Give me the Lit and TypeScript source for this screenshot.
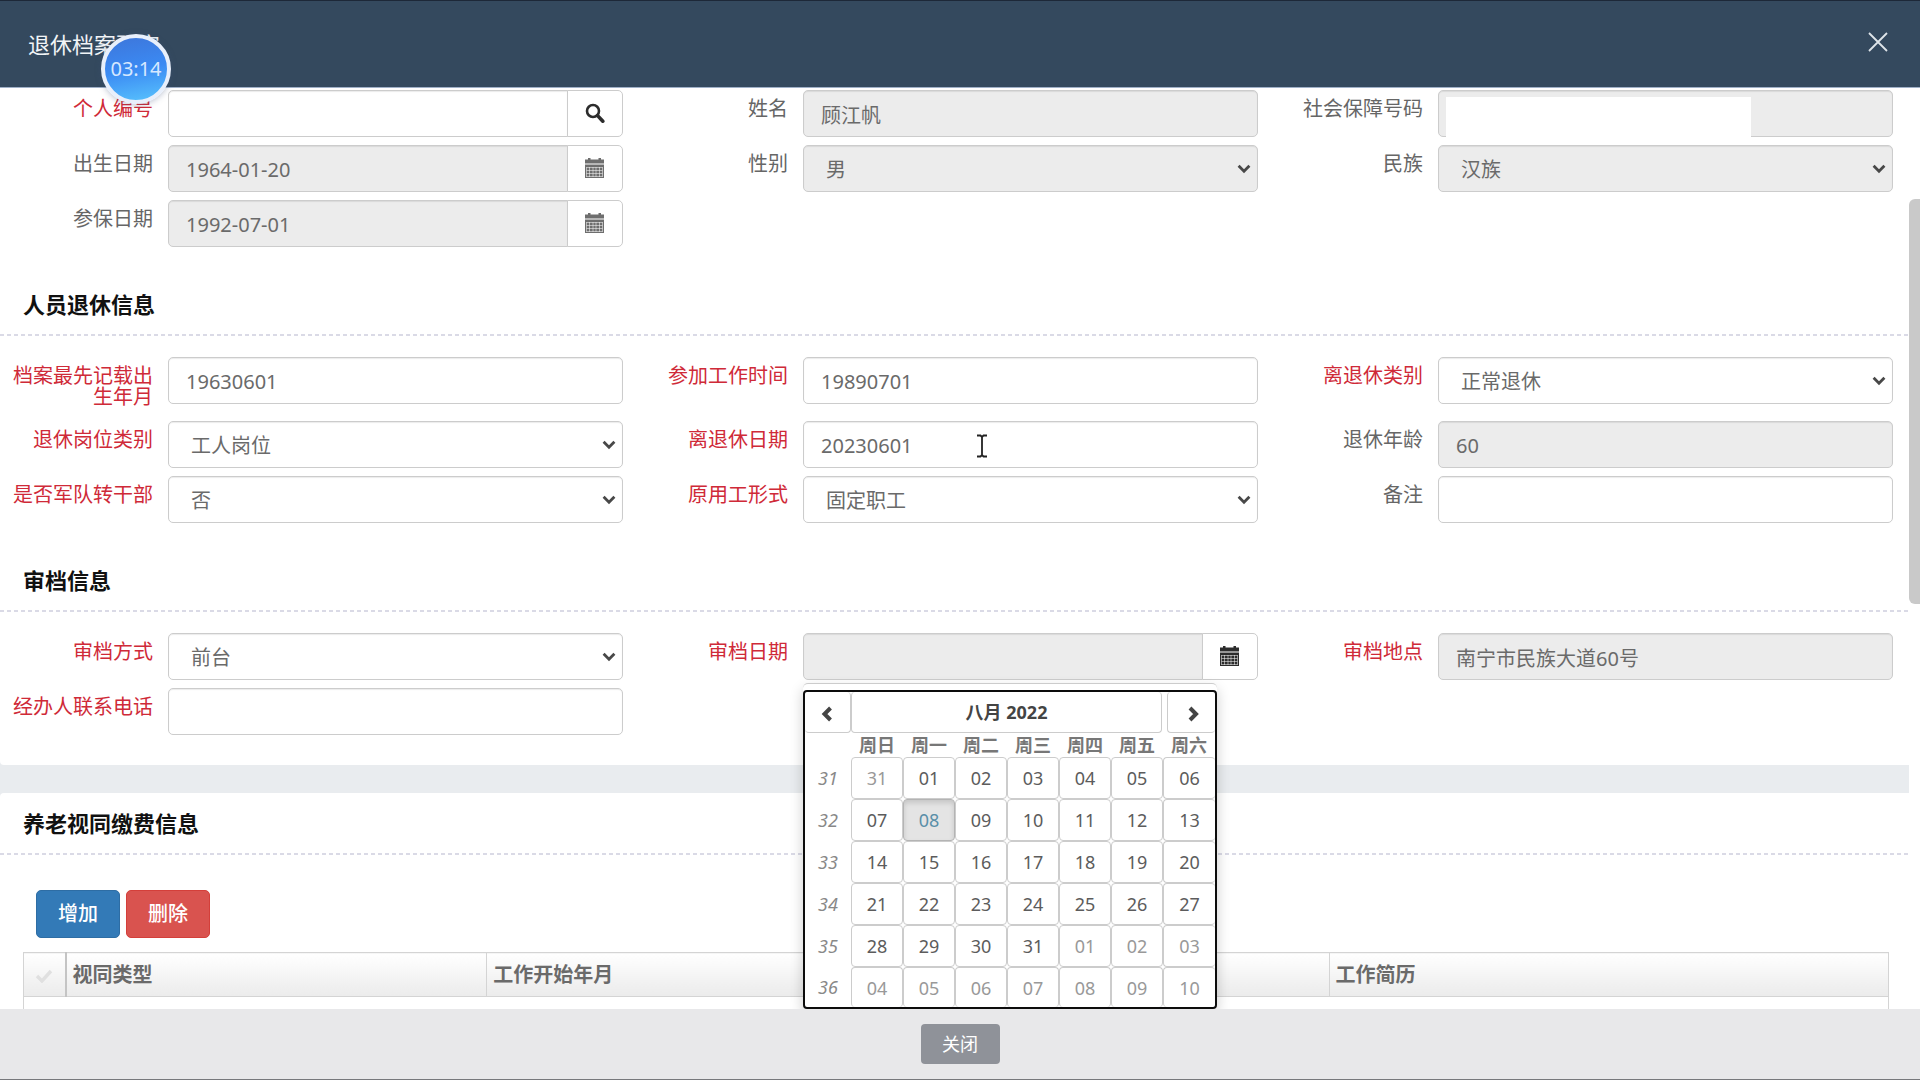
import { LitElement, html, css, svg, nothing, TemplateResult } from "lit";
import { customElement, state } from "lit/decorators.js";
import { classMap } from "lit/directives/class-map.js";
import { styleMap } from "lit/directives/style-map.js";

type Kind = "text" | "select" | "search" | "date";

interface Field {
  id: string;
  label: string;
  kind: Kind;
  value?: string;
  required?: boolean;
  disabled?: boolean;
  masked?: boolean;
  pointer?: boolean;
  open?: boolean;
}

const PERSON: Field[] = [
  { id: "person-no", label: "个人编号", kind: "search", required: true },
  { id: "name", label: "姓名", kind: "text", value: "顾江帆", disabled: true },
  { id: "ssn", label: "社会保障号码", kind: "text", disabled: true, masked: true },
  { id: "birth", label: "出生日期", kind: "date", value: "1964-01-20", disabled: true },
  { id: "gender", label: "性别", kind: "select", value: "男", disabled: true },
  { id: "nation", label: "民族", kind: "select", value: "汉族", disabled: true },
  { id: "insured", label: "参保日期", kind: "date", value: "1992-07-01", disabled: true },
];

const RETIRE: Field[] = [
  { id: "file-birth", label: "档案最先记载出生年月", kind: "text", value: "19630601", required: true },
  { id: "work-start", label: "参加工作时间", kind: "text", value: "19890701", required: true },
  { id: "retire-type", label: "离退休类别", kind: "select", value: "正常退休", required: true },
  { id: "post-type", label: "退休岗位类别", kind: "select", value: "工人岗位", required: true },
  { id: "retire-date", label: "离退休日期", kind: "text", value: "20230601", required: true, pointer: true },
  { id: "retire-age", label: "退休年龄", kind: "text", value: "60", disabled: true },
  { id: "army", label: "是否军队转干部", kind: "select", value: "否", required: true },
  { id: "employ", label: "原用工形式", kind: "select", value: "固定职工", required: true },
  { id: "remark", label: "备注", kind: "text" },
];

const REVIEW: Field[] = [
  { id: "review-way", label: "审档方式", kind: "select", value: "前台", required: true },
  { id: "review-date", label: "审档日期", kind: "date", required: true, open: true },
  { id: "review-place", label: "审档地点", kind: "text", value: "南宁市民族大道60号", required: true, disabled: true },
  { id: "phone", label: "经办人联系电话", kind: "text", required: true },
];

const WEEKDAYS = ["周日", "周一", "周二", "周三", "周四", "周五", "周六"];
const FONT = css`"Noto Sans", "Noto Sans CJK SC", sans-serif`;

const searchIcon = svg`<svg class="icon" viewBox="0 0 20 20" aria-hidden="true">
  <circle cx="8" cy="8" r="6" fill="none" stroke="currentColor" stroke-width="2.6"/>
  <path d="M12.6 12.6 L17.8 18.2" stroke="currentColor" stroke-width="3.6" stroke-linecap="round"/></svg>`;

const calendarIcon = svg`<svg class="icon" viewBox="0 0 20 20" aria-hidden="true">
  <path fill="currentColor" d="M0 1.5h3V0h2.5v1.5h8V0H16v1.5h3V5.5H0z"/>
  <path fill="currentColor" d="M0 6.5h19V20H0z"/>
  <path fill="none" stroke="#fff" stroke-opacity=".5" stroke-width="1" d="M1.5 9.5h16 M1.5 12.5h16 M1.5 15.5h16 M1.5 18.5h16 M1.5 9v10 M4.5 9v10 M8 9v10 M11 9v10 M14.5 9v10 M17.5 9v10"/></svg>`;

@customElement("date-picker")
export class DatePicker extends LitElement {
  static styles = css`
    :host { display: block; color: #5c5c5c; font-family: ${FONT}; font-size: 18px; }
    .ring { border: 2px solid #0c0c0c; border-radius: 4px; overflow: hidden; background: #fff; }
    table { width: 100%; table-layout: fixed; border-collapse: collapse; }
    th, td { padding: 0; text-align: center; line-height: 24px; }
    .week-col { width: 46px; }
    .week { font-style: italic; color: #888; }
    .weekday { height: 24px; color: #777; font-weight: bold; }
    button {
      box-sizing: border-box; display: block; width: 100%; height: 42px; padding: 0;
      border: 1px solid #ccc; border-radius: 4px; background: #fff;
      color: inherit; font: inherit; line-height: 24px;
    }
    .nav { height: 41px; border-top: 0; font-weight: bold; color: #444; }
    .first { border-left: 0; }
    .next { border-right: 0; }
    .title { padding-right: 1px; }
    .next-cell { padding-left: 4px; }
    .muted { color: #999; }
    .today { background: #e4e4e4; border-color: #b4b4b4; color: #5a8fa8; box-shadow: inset 0 3px 5px rgba(0, 0, 0, .13); }
    tbody tr:last-child button { height: 40px; border-bottom: 0; }
    td:last-child button { border-right: 0; }
    .chevron { width: 14px; height: 16px; vertical-align: middle; }
  `;

  private weeks(): { week: number; days: Date[] }[] {
    return Array.from({ length: 6 }, (_, w) => ({
      week: 31 + w,
      days: Array.from({ length: 7 }, (_, d) => new Date(2022, 6, 31 + w * 7 + d)),
    }));
  }

  render() {
    return html`<div class="ring"><table>
      <colgroup><col class="week-col" /><col span="7" /></colgroup>
      <thead>
        <tr>
          <th><button class="nav first" aria-label="‹"><svg class="chevron" viewBox="0 0 14 16"><path d="M9.5 2 L3.5 8 L9.5 14" fill="none" stroke="currentColor" stroke-width="4"/></svg></button></th>
          <th class="title" colspan="6"><button class="nav">八月 2022</button></th>
          <th class="next-cell"><button class="nav next" aria-label="›"><svg class="chevron" viewBox="0 0 14 16"><path d="M5 2 L11 8 L5 14" fill="none" stroke="currentColor" stroke-width="4"/></svg></button></th>
        </tr>
        <tr><th></th>${WEEKDAYS.map((d) => html`<th class="weekday">${d}</th>`)}</tr>
      </thead>
      <tbody>
        ${this.weeks().map((row) => html`<tr>
          <td class="week">${row.week}</td>
          ${row.days.map((day) => html`<td><button class=${classMap({
            muted: day.getMonth() !== 7,
            today: day.getMonth() === 7 && day.getDate() === 8,
          })}>${String(day.getDate()).padStart(2, "0")}</button></td>`)}
        </tr>`)}
      </tbody>
    </table></div>`;
  }
}

@customElement("app-root")
export class AppRoot extends LitElement {
  @state() private scroll = { top: 12, size: 44 };

  static styles = css`
    :host { display: block; color: #666; font-family: ${FONT}; font-size: 20px; line-height: 24px; }
    * { box-sizing: border-box; }
    .dialog { position: relative; display: flex; flex-direction: column; height: 100vh; overflow: hidden; background: #fff; border-bottom: 1px solid #77787c; }
    .header {
      display: flex; flex: none; justify-content: space-between; align-items: flex-start;
      height: 88px; padding: 28px 30px 0 28px; background: #34495e;
      border-top: 1px solid #1d2838; border-bottom: 1px solid #9fb0c8; color: #f1f4f7;
    }
    .title { margin: 0; font-size: 22px; line-height: 30px; font-weight: 400; }
    .close { display: flex; margin-top: 1px; padding: 0; border: 0; background: none; color: #dfe5ea; }
    .close svg { width: 24px; height: 24px; }
    .timer {
      position: absolute; left: 101px; top: 34px; width: 70px; height: 70px;
      display: flex; align-items: center; justify-content: center;
      border: 4px solid #e8effb; border-radius: 50%;
      background: linear-gradient(170deg, #3d78dd 5%, #3b8af3 50%, #55bdfc 95%);
      color: #d6e8ff; box-shadow: 0 1px 6px rgba(60, 80, 120, .35);
    }
    .main { display: flex; flex: 1; min-height: 0; overflow: hidden; }
    .content { flex: 1; min-width: 0; background: #e9ecef; }
    .panel { background: #fff; border-radius: 4px 0 0 4px; }
    .panel.form { padding: 2px 0 30px; border-top-left-radius: 0; }
    .panel.list { margin-top: 28px; min-height: 240px; }
    .track { position: relative; flex: none; width: 11px; background: #fff; }
    .thumb { position: absolute; left: 0; right: 0; border-radius: 6px 0 0 6px; background: #c9c9c9; }

    .heading { margin: 0; padding: 44px 23px 17px; color: #111; font-size: 22px; line-height: 26px; font-weight: bold; }
    .list .heading { padding-top: 17px; }
    .rule { height: 2px; margin-bottom: 21px; background: repeating-linear-gradient(90deg, #dadae6 0 4px, transparent 4px 7px); }

    .grid { display: grid; grid-template-columns: repeat(3, minmax(0, 1fr)); row-gap: 8px; padding-right: 4px; }
    .field { display: flex; align-items: flex-start; gap: 15px; padding-right: 12px; }
    .label { flex: none; width: 153px; padding: 8px 0 6px 12px; text-align: right; line-height: 21px; }
    .label.required { color: #cf2a38; }
    .control { position: relative; display: flex; flex: 1; min-width: 0; height: 47px; }
    .box {
      flex: 1; width: 100%; min-width: 0; height: 47px; padding: 2px 17px 0; border: 1px solid #ccc; border-radius: 5px;
      background: #fff; color: #6a6a6a; font: inherit; box-shadow: inset 0 1px 1px rgba(0, 0, 0, .08); outline: none; opacity: 1;
    }
    select.box { padding-left: 22px; appearance: none; }
    .box:disabled, .box:read-only:not(select) { background: #ececec; }
    .grouped { border-top-right-radius: 0; border-bottom-right-radius: 0; }
    .addon {
      display: flex; flex: none; align-items: center; justify-content: center; width: 56px; margin-left: -1px; padding: 0 1px 2px 0;
      border: 1px solid #ccc; border-radius: 0 5px 5px 0; background: #fff; color: #2c2c2c;
    }
    .addon:disabled { color: #6e6e6e; }
    .icon { width: 20px; height: 20px; }
    .arrow { position: absolute; right: 7px; top: 19px; width: 14px; height: 10px; pointer-events: none; color: #484848; }
    .mask { position: absolute; left: 8px; top: 7px; width: 67%; height: 42px; background: #fff; }
    .pointer { position: absolute; left: 173px; top: 13px; width: 12px; height: 24px; pointer-events: none; }
    .popup {
      position: absolute; z-index: 2; left: 0; top: 50px; width: 414px; padding-top: 6px;
      border-top: 1px solid #ccc; border-radius: 5px; background: #fff; box-shadow: 0 6px 14px rgba(0, 0, 0, .2);
    }

    .actions { display: flex; gap: 6px; padding: 14px 36px; }
    .button { height: 48px; padding: 0 21px; border: 1px solid; border-radius: 5px; color: #fff; font: inherit; font-weight: 500; }
    .add { background: #337ab7; border-color: #2e6da4; }
    .remove { background: #d9534f; border-color: #d43f3a; }
    .table-wrap { padding: 0 20px 0 23px; }
    .table { width: 100%; height: 90px; table-layout: fixed; border-collapse: collapse; border: 1px solid #d4d4d4; }
    .table th {
      height: 44px; padding: 0 6px; border: 1px solid #d4d4d4; background: linear-gradient(#fff, #ebebeb);
      color: #6a6a6a; font-weight: bold; text-align: left;
    }
    .table .check-cell { padding: 0; border-right: 2px solid #c4c4c4; text-align: center; }
    .c-check { width: 42px; }
    .c-last { width: 30%; }
    .check { width: 18px; height: 14px; vertical-align: middle; }

    .footer { display: flex; flex: none; justify-content: center; align-items: flex-start; height: 70px; padding-top: 15px; background: #e8e8ea; }
    .shut { width: 79px; height: 40px; padding: 0; border: 0; border-radius: 4px; background: #8f9299; color: #fff; font: inherit; font-size: 18px; }
  `;

  private control(f: Field): TemplateResult {
    if (f.kind === "select") {
      return html`<select class="box" id=${f.id} ?disabled=${f.disabled}><option>${f.value}</option></select>
        <svg class="arrow" viewBox="0 0 14 10" aria-hidden="true"><path d="M1.6 1.8 L7 7.2 L12.4 1.8" fill="none" stroke="currentColor" stroke-width="2.8"/></svg>`;
    }
    if (f.kind === "text") {
      return html`<input class="box" type="text" id=${f.id} .value=${f.value ?? ""} ?disabled=${f.disabled} />
        ${f.masked ? html`<span class="mask"></span>` : nothing}
        ${f.pointer ? html`<svg class="pointer" viewBox="0 0 12 24" aria-hidden="true"><path d="M1 1.5 H4.5 L6 3 L7.5 1.5 H11 M6 3 V21 M1 22.5 H4.5 L6 21 L7.5 22.5 H11" fill="none" stroke="#222" stroke-width="1.8"/></svg>` : nothing}`;
    }
    return html`<input class="box grouped" type="text" id=${f.id} .value=${f.value ?? ""}
        ?disabled=${f.disabled} ?readonly=${f.kind === "date"} />
      <button class="addon" ?disabled=${f.disabled} aria-label=${f.label}>${f.kind === "search" ? searchIcon : calendarIcon}</button>
      ${f.open ? html`<div class="popup"><date-picker></date-picker></div>` : nothing}`;
  }

  private grid(fields: Field[]): TemplateResult {
    return html`<div class="grid">${fields.map((f) => html`<div class="field">
      <label class=${classMap({ label: true, required: !!f.required })} for=${f.id}>${f.label}</label>
      <div class="control">${this.control(f)}</div>
    </div>`)}</div>`;
  }

  private heading(text: string): TemplateResult {
    return html`<h2 class="heading">${text}</h2><div class="rule"></div>`;
  }

  render() {
    return html`<div class="dialog">
      <header class="header">
        <h1 class="title">退休档案预审</h1>
        <button class="close" aria-label="关闭"><svg viewBox="0 0 24 24"><path d="M3 3 L21 21 M21 3 L3 21" fill="none" stroke="currentColor" stroke-width="1.8"/></svg></button>
      </header>
      <div class="main">
        <div class="content">
          <section class="panel form">
            ${this.grid(PERSON)}
            ${this.heading("人员退休信息")}
            ${this.grid(RETIRE)}
            ${this.heading("审档信息")}
            ${this.grid(REVIEW)}
          </section>
          <section class="panel list">
            ${this.heading("养老视同缴费信息")}
            <div class="actions">
              <button class="button add">增加</button>
              <button class="button remove">删除</button>
            </div>
            <div class="table-wrap">
              <table class="table">
                <colgroup><col class="c-check" /><col /><col /><col /><col class="c-last" /></colgroup>
                <thead><tr>
                  <th class="check-cell"><svg class="check" viewBox="0 0 18 14"><path d="M2 7 L7 12 L16 2" fill="none" stroke="#e0e0e0" stroke-width="3.4"/></svg></th>
                  <th>视同类型</th><th>工作开始年月</th><th></th><th>工作简历</th>
                </tr></thead>
                <tbody><tr><td colspan="5"></td></tr></tbody>
              </table>
            </div>
          </section>
        </div>
        <div class="track"><div class="thumb" style=${styleMap({ top: `${this.scroll.top}%`, height: `${this.scroll.size}%` })}></div></div>
      </div>
      <footer class="footer"><button class="shut">关闭</button></footer>
      <div class="timer">03:14</div>
    </div>`;
  }
}
